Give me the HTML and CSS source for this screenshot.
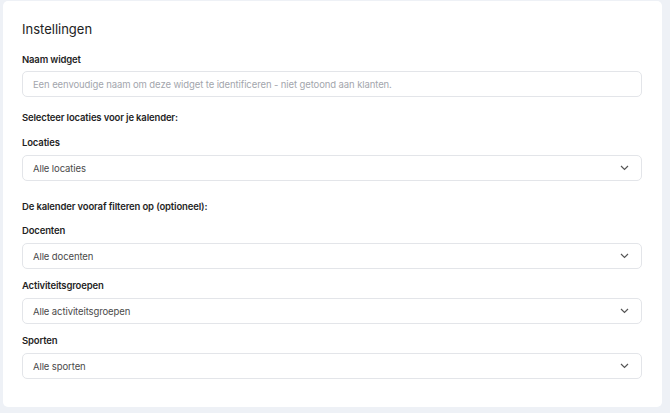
FILE: index.html
```html
<!DOCTYPE html>
<html lang="nl">
<head>
<meta charset="utf-8">
<link rel="stylesheet" href="styles.css">
</head>
<body>
<div class="card">
  <h1 class="title">Instellingen</h1>
  <div class="field first">
    <div class="label">Naam widget</div>
    <div class="input placeholder">Een eenvoudige naam om deze widget te identificeren - niet getoond aan klanten.</div>
  </div>
  <div class="section">Selecteer locaties voor je kalender:</div>
  <div class="field">
    <div class="label">Locaties</div>
    <div class="input select"><span>Alle locaties</span><svg class="chev" width="9" height="6" viewBox="0 0 9 6"><path d="M1 1l3.5 3.5L8 1" fill="none" stroke="#555" stroke-width="1.2"/></svg></div>
  </div>
  <div class="section second">De kalender vooraf filteren op (optioneel):</div>
  <div class="field">
    <div class="label">Docenten</div>
    <div class="input select"><span>Alle docenten</span><svg class="chev" width="9" height="6" viewBox="0 0 9 6"><path d="M1 1l3.5 3.5L8 1" fill="none" stroke="#555" stroke-width="1.2"/></svg></div>
  </div>
  <div class="field">
    <div class="label">Activiteitsgroepen</div>
    <div class="input select"><span>Alle activiteitsgroepen</span><svg class="chev" width="9" height="6" viewBox="0 0 9 6"><path d="M1 1l3.5 3.5L8 1" fill="none" stroke="#555" stroke-width="1.2"/></svg></div>
  </div>
  <div class="field">
    <div class="label">Sporten</div>
    <div class="input select"><span>Alle sporten</span><svg class="chev" width="9" height="6" viewBox="0 0 9 6"><path d="M1 1l3.5 3.5L8 1" fill="none" stroke="#555" stroke-width="1.2"/></svg></div>
  </div>
</div>
</body>
</html>
```
FILE: styles.css
```css
html, body {
  margin: 0;
  padding: 0;
}
body {
  background: #eef1f6;
  font-family: Inter, "Noto Sans", sans-serif;
  color: #1d1d1f;
  width: 670px;
  height: 413px;
  overflow: hidden;
}
.card {
  margin: 1px 0 0 3px;
  width: 659px;
  height: 406px;
  box-sizing: border-box;
  background: #fff;
  border-radius: 5px;
  padding: 19px 20px 0 19px;
  display: flex;
  flex-direction: column;
}
.title {
  margin: 0;
  font-size: 13px;
  line-height: 18px;
  font-weight: 400;
  color: #222;
}
.field {
  display: flex;
  flex-direction: column;
  gap: 5px;
  margin-top: 10px;
}
.field.first {
  margin-top: 15px;
  gap: 4px;
}
.label, .section {
  font-size: 9.5px;
  line-height: 14px;
  font-weight: 600;
  letter-spacing: -0.15px;
  color: #1f1f1f;
}
.section {
  margin-top: 14px;
  margin-bottom: 1px;
}
.section.second {
  margin-top: 19px;
  margin-bottom: 0;
}
.input {
  height: 26px;
  box-sizing: border-box;
  border: 1px solid #e3e5e9;
  border-radius: 5px;
  padding: 0 12px 0 10px;
  display: flex;
  align-items: center;
  justify-content: space-between;
  font-size: 9.5px;
  letter-spacing: -0.1px;
  color: #4a4a4a;
}
.input.placeholder {
  color: #a3a6ad;
}
.chev {
  display: block;
}
```
